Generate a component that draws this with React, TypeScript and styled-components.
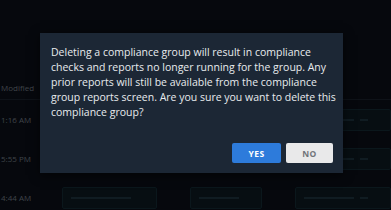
import * as React from 'react'
import styled, { createGlobalStyle } from 'styled-components'

const GlobalStyle = createGlobalStyle`
  html, body {
    margin: 0;
    padding: 0;
    background: #0a0e15;
  }
  * {
    box-sizing: border-box;
  }
`

const Page = styled.div`
  position: relative;
  width: 391px;
  height: 210px;
  overflow: hidden;
  background: #0b1018;
  font-family: 'Open Sans', 'Liberation Sans', sans-serif;
`

const Table = styled.div`
  display: flex;
  flex-direction: column;
  padding-top: 76px;
`

const HeaderRow = styled.div`
  display: flex;
  align-items: center;
  height: 24px;
  border-bottom: 1px solid #1a222c;
`

const Row = styled.div`
  display: grid;
  grid-template-columns: 62px 95px 33px 72px 33px 96px;
  align-items: center;
  height: 39px;
`

const TimeCell = styled.div`
  font-size: 8px;
  color: #737b85;
  white-space: nowrap;
  padding-left: 1px;
`

const Field = styled.div<{ $col: number }>`
  grid-column: ${p => p.$col};
  height: 22px;
  border: 1px solid #142a33;
  background: #0d1a21;
  border-radius: 2px;
  display: flex;
  align-items: center;
  padding: 0 8px;
  gap: 6px;
`

const FieldText = styled.div<{ $w: number }>`
  width: ${p => p.$w}px;
  height: 2px;
  background: #1e343e;
`

const Backdrop = styled.div`
  position: absolute;
  inset: 0;
  background: rgba(0, 0, 0, 0.45);
  display: flex;
  align-items: flex-start;
  padding: 33px 0 0 40px;
`

const Dialog = styled.div`
  width: 303px;
  height: 140px;
  background: #1c2735;
  box-shadow: 0 2px 10px rgba(0, 0, 0, 0.6);
  padding: 12px 10px 10px 11px;
  display: flex;
  flex-direction: column;
`

const Message = styled.p`
  margin: 0;
  font-size: 10.5px;
  line-height: 15px;
  color: #e8ebee;
  width: 285px;
`

const Actions = styled.div`
  margin-top: auto;
  display: flex;
  justify-content: flex-end;
  gap: 5px;
`

const Button = styled.button<{ $primary?: boolean }>`
  height: 20px;
  width: ${p => (p.$primary ? 49 : 47)}px;
  border: none;
  border-radius: 2px;
  padding: 0;
  font-family: 'Open Sans', 'Liberation Sans', sans-serif;
  font-size: 8.5px;
  font-weight: 700;
  letter-spacing: 0.5px;
  background: ${p => (p.$primary ? '#2d7bdb' : '#e9e9ea')};
  color: ${p => (p.$primary ? '#ffffff' : '#707479')};
`

const rows = ['1:16 AM', '5:55 PM', '4:44 AM']

export default function App() {
  return (
    <Page>
      <GlobalStyle />
      <Table>
        <HeaderRow>
          <TimeCell>Modified</TimeCell>
        </HeaderRow>
        {rows.map(t => (
          <Row key={t}>
            <TimeCell>{t}</TimeCell>
            <Field $col={2}>
              <FieldText $w={60} />
            </Field>
            <Field $col={4}>
              <FieldText $w={40} />
            </Field>
            <Field $col={6}>
              <FieldText $w={50} />
              <FieldText $w={8} />
            </Field>
          </Row>
        ))}
      </Table>
      <Backdrop>
        <Dialog>
          <Message>
            Deleting a compliance group will result in compliance checks and reports no longer running for the group. Any prior reports will still be available from the compliance group reports screen. Are you sure you want to delete this compliance group?
          </Message>
          <Actions>
            <Button $primary>YES</Button>
            <Button>NO</Button>
          </Actions>
        </Dialog>
      </Backdrop>
    </Page>
  )
}
